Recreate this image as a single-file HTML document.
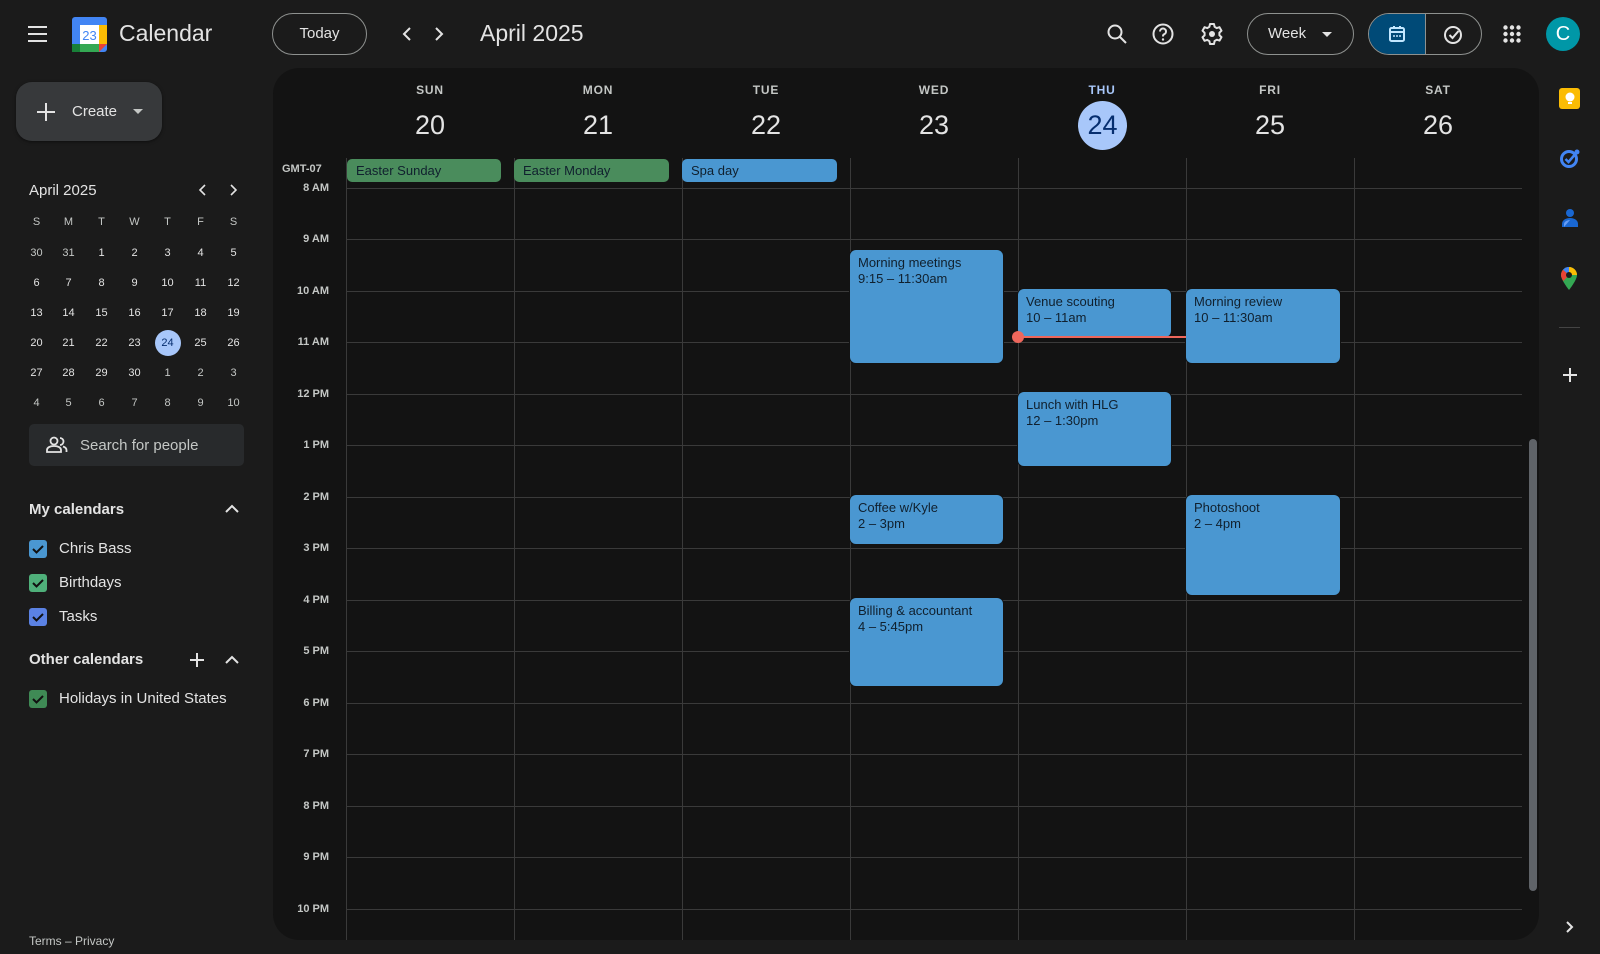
<!DOCTYPE html>
<html><head><meta charset="utf-8"><style>
*{box-sizing:border-box;margin:0;padding:0}
body{width:1600px;height:954px;background:#1b1b1b;font-family:"Liberation Sans",sans-serif;color:#e3e3e3;position:relative;overflow:hidden}
.a{position:absolute}
.main{left:273px;top:68px;width:1266px;height:872px;background:#131313;border-radius:26px;overflow:hidden}
.vl{position:absolute;width:1px;background:#3a3a3a}
.hl{position:absolute;height:1px;background:#3a3a3a;left:73px;width:1176px}
.dn{position:absolute;top:15px;width:168px;text-align:center;font-size:12px;letter-spacing:.8px;color:#c4c7c5;font-weight:bold}
.dd{position:absolute;top:42px;width:168px;text-align:center;font-size:27px;color:#e3e3e3}
.tl{position:absolute;left:0;width:56px;text-align:right;font-size:11px;color:#c4c7c5;font-weight:bold}
.ev{position:absolute;background:#4a97d1;border-radius:6px;color:#10202e;font-size:13px;line-height:16px;padding:5px 8px;box-shadow:0 0 0 1px #131313}
.chip{position:absolute;top:91px;height:23px;border-radius:5px;color:#10202e;font-size:13px;line-height:23px;padding-left:9px}
.mc{position:absolute;width:33px;text-align:center;font-size:11px;color:#e3e3e3}
.cb{position:absolute;left:29px;width:18px;height:18px;border-radius:3px}
.cbl{position:absolute;left:59px;font-size:15px;color:#e3e3e3}
</style></head><body>
<svg class="a" style="left:27px;top:24px" width="22" height="20"><path d="M1 3h19M1 10h19M1 17h19" stroke="#e3e3e3" stroke-width="2"/></svg>
<svg class="a" style="left:72px;top:17px" width="35" height="35" viewBox="0 0 35 35">
<rect x="0" y="0" width="35" height="35" rx="3" fill="#4285f4"/>
<rect x="27" y="8" width="8" height="19" fill="#fbbc04"/>
<rect x="0" y="27" width="27" height="8" fill="#34a853"/>
<rect x="0" y="27" width="8" height="8" fill="#188038"/>
<path d="M27 27h8l-8 8z" fill="#ea4335"/>
<rect x="8" y="8" width="19" height="19" fill="#fff"/>
<text x="17.5" y="23" text-anchor="middle" font-size="13" fill="#4285f4" font-family="Liberation Sans">23</text></svg>
<div class="a" style="left:119px;top:20px;font-size:23px;color:#e3e3e3">Calendar</div>
<div class="a" style="left:272px;top:13px;width:95px;height:42px;border:1px solid #8e918f;border-radius:21px;text-align:center;line-height:40px;font-size:15px">Today</div>
<svg class="a" style="left:400px;top:26px" width="50" height="16"><path d="M10 2L4 8l6 6M36 2l6 6-6 6" stroke="#e3e3e3" stroke-width="2" fill="none"/></svg>
<div class="a" style="left:480px;top:20px;font-size:23px;color:#e3e3e3">April 2025</div>
<svg class="a" style="left:1106px;top:23px" width="22" height="22"><circle cx="9" cy="9" r="6.5" stroke="#e3e3e3" stroke-width="2" fill="none"/><path d="M14 14l6 6" stroke="#e3e3e3" stroke-width="2"/></svg>
<svg class="a" style="left:1152px;top:23px" width="22" height="22"><circle cx="11" cy="11" r="9.5" stroke="#e3e3e3" stroke-width="2" fill="none"/><path d="M8 8.5a3 3 0 1 1 4 2.8c-1 .5-1 1-1 2.2" stroke="#e3e3e3" stroke-width="2" fill="none"/><circle cx="11" cy="16.5" r="1.2" fill="#e3e3e3"/></svg>
<svg class="a" style="left:1200px;top:22px" width="24" height="24" viewBox="0 0 24 24"><path d="M10 2h4l.6 2.8 2.2 1.3 2.7-.9 2 3.5-2.1 1.9v2.6l2.1 1.9-2 3.5-2.7-.9-2.2 1.3L14 22h-4l-.6-2.8-2.2-1.3-2.7.9-2-3.5 2.1-1.9v-2.6L2.5 8.7l2-3.5 2.7.9 2.2-1.3z" stroke="#e3e3e3" stroke-width="2" fill="none" stroke-linejoin="round"/><circle cx="12" cy="12" r="3" fill="#e3e3e3"/></svg>
<div class="a" style="left:1247px;top:13px;width:107px;height:42px;border:1px solid #8e918f;border-radius:21px;line-height:40px;font-size:15px;padding-left:20px">Week<span style="position:absolute;left:74px;top:18px;border:5px solid transparent;border-top-color:#e3e3e3;border-bottom:0"></span></div>
<div class="a" style="left:1368px;top:13px;width:114px;height:42px;border:1px solid #8e918f;border-radius:21px;overflow:hidden">
<div style="position:absolute;left:0;top:0;width:56px;height:42px;background:#004a77"></div>
<div style="position:absolute;left:56px;top:0;width:1px;height:42px;background:#8e918f"></div>
<svg style="position:absolute;left:19px;top:11px" width="18" height="18"><rect x="2" y="3" width="14" height="13" rx="1.5" stroke="#c2e7ff" stroke-width="2" fill="none"/><path d="M2 7h14M6 1v3M12 1v3" stroke="#c2e7ff" stroke-width="2"/><circle cx="6" cy="11" r="1" fill="#c2e7ff"/><circle cx="9" cy="11" r="1" fill="#c2e7ff"/><circle cx="12" cy="11" r="1" fill="#c2e7ff"/></svg>
<svg style="position:absolute;left:74px;top:11px" width="20" height="20"><circle cx="10" cy="10" r="8" stroke="#e3e3e3" stroke-width="2" fill="none"/><path d="M6.5 10l3 3 6-7" stroke="#e3e3e3" stroke-width="2" fill="none"/></svg>
</div>
<svg class="a" style="left:1503px;top:25px" width="18" height="18"><g fill="#e3e3e3"><circle cx="2.5" cy="2.5" r="2.2"/><circle cx="9" cy="2.5" r="2.2"/><circle cx="15.5" cy="2.5" r="2.2"/><circle cx="2.5" cy="9" r="2.2"/><circle cx="9" cy="9" r="2.2"/><circle cx="15.5" cy="9" r="2.2"/><circle cx="2.5" cy="15.5" r="2.2"/><circle cx="9" cy="15.5" r="2.2"/><circle cx="15.5" cy="15.5" r="2.2"/></g></svg>
<div class="a" style="left:1546px;top:17px;width:34px;height:34px;border-radius:50%;background:#0097a7;color:#fff;text-align:center;line-height:34px;font-size:20px">C</div>

<div class="a" style="left:16px;top:82px;width:146px;height:59px;background:#37393b;border-radius:16px;box-shadow:0 1px 3px rgba(0,0,0,.5)"></div>
<svg class="a" style="left:36px;top:102px" width="20" height="20"><path d="M10 1v18M1 10h18" stroke="#e3e3e3" stroke-width="2"/></svg>
<div class="a" style="left:72px;top:103px;font-size:15px;color:#e3e3e3">Create</div>
<div class="a" style="left:133px;top:109px;border:5px solid transparent;border-top-color:#c4c7c5;border-bottom:0"></div>
<div class="a" style="left:29px;top:182px;font-size:15px">April 2025</div>
<svg class="a" style="left:196px;top:183px" width="48" height="14"><path d="M9 2L4 7l5 5M35 2l5 5-5 5" stroke="#e3e3e3" stroke-width="1.6" fill="none"/></svg>
<div id="mini"></div>
<div class="a" style="left:29px;top:424px;width:215px;height:42px;background:#282a2c;border-radius:5px"></div>
<svg class="a" style="left:46px;top:436px" width="22" height="18"><circle cx="8" cy="5" r="3.5" stroke="#e3e3e3" stroke-width="1.8" fill="none"/><path d="M1 16v-2c0-2.5 3-4 7-4s7 1.5 7 4v2z" stroke="#e3e3e3" stroke-width="1.8" fill="none"/><path d="M14 2a3.5 3.5 0 0 1 0 7M17 10.5c2 .7 3.5 1.8 3.5 3.5v2" stroke="#e3e3e3" stroke-width="1.8" fill="none"/></svg>
<div class="a" style="left:80px;top:437px;font-size:15px;color:#c4c7c5">Search for people</div>
<div class="a" style="left:29px;top:501px;font-size:15px;font-weight:bold;color:#e3e3e3">My calendars</div>
<svg class="a" style="left:224px;top:504px" width="16" height="10"><path d="M2 8l6-6 6 6" stroke="#e3e3e3" stroke-width="2" fill="none"/></svg>
<div class="cb" style="top:540px;background:#4a97d1"></div><div class="cbl" style="top:540px">Chris Bass</div>
<div class="cb" style="top:574px;background:#4fb07a"></div><div class="cbl" style="top:574px">Birthdays</div>
<div class="cb" style="top:608px;background:#5b82e4"></div><div class="cbl" style="top:608px">Tasks</div>
<div class="a" style="left:29px;top:651px;font-size:15px;font-weight:bold;color:#e3e3e3">Other calendars</div>
<svg class="a" style="left:189px;top:652px" width="16" height="16"><path d="M8 1v14M1 8h14" stroke="#e3e3e3" stroke-width="2"/></svg>
<svg class="a" style="left:224px;top:655px" width="16" height="10"><path d="M2 8l6-6 6 6" stroke="#e3e3e3" stroke-width="2" fill="none"/></svg>
<div class="cb" style="top:690px;background:#3f8a55"></div><div class="cbl" style="top:690px">Holidays in United States</div>
<svg class="a" style="left:29px;top:540px" width="18" height="170"><g stroke="#111" stroke-width="2" fill="none"><path d="M4 9l3.5 3.5L14 6"/><path d="M4 43l3.5 3.5L14 40"/><path d="M4 77l3.5 3.5L14 74"/><path d="M4 159l3.5 3.5L14 156"/></g></svg>
<div class="a" style="left:29px;top:934px;font-size:12px;color:#c4c7c5">Terms – Privacy</div>

<div class="a main">
  <div class="dn" style="left:73px">SUN</div><div class="dd" style="left:73px">20</div>
  <div class="dn" style="left:241px">MON</div><div class="dd" style="left:241px">21</div>
  <div class="dn" style="left:409px">TUE</div><div class="dd" style="left:409px">22</div>
  <div class="dn" style="left:577px">WED</div><div class="dd" style="left:577px">23</div>
  <div class="dn" style="left:745px;color:#a8c7fa">THU</div>
  <div class="a" style="left:805px;top:33px;width:49px;height:49px;border-radius:50%;background:#a8c7fa;color:#062e6f;font-size:27px;text-align:center;line-height:49px">24</div>
  <div class="dn" style="left:913px">FRI</div><div class="dd" style="left:913px">25</div>
  <div class="dn" style="left:1081px">SAT</div><div class="dd" style="left:1081px">26</div>
  <div class="a" style="left:9px;top:95px;font-size:11px;font-weight:bold;color:#c4c7c5">GMT-07</div>
  <div class="vl" style="left:73px;top:90px;height:800px"></div>
  <div class="vl" style="left:241px;top:90px;height:800px"></div>
  <div class="vl" style="left:409px;top:90px;height:800px"></div>
  <div class="vl" style="left:577px;top:90px;height:800px"></div>
  <div class="vl" style="left:745px;top:90px;height:800px"></div>
  <div class="vl" style="left:913px;top:90px;height:800px"></div>
  <div class="vl" style="left:1081px;top:90px;height:800px"></div>
  <div class="chip" style="left:74px;width:154px;background:#4a8c5c">Easter Sunday</div>
  <div class="chip" style="left:241px;width:155px;background:#4a8c5c">Easter Monday</div>
  <div class="chip" style="left:409px;width:155px;background:#4a97d1">Spa day</div>
  <div id="hours"></div>
  <div class="ev" style="left:577px;top:182px;width:153px;height:113px">Morning meetings<br>9:15 – 11:30am</div>
  <div class="ev" style="left:745px;top:221px;width:153px;height:48px">Venue scouting<br>10 – 11am</div>
  <div class="ev" style="left:913px;top:221px;width:154px;height:74px">Morning review<br>10 – 11:30am</div>
  <div class="ev" style="left:745px;top:324px;width:153px;height:74px">Lunch with HLG<br>12 – 1:30pm</div>
  <div class="ev" style="left:577px;top:427px;width:153px;height:49px">Coffee w/Kyle<br>2 – 3pm</div>
  <div class="ev" style="left:913px;top:427px;width:154px;height:100px">Photoshoot<br>2 – 4pm</div>
  <div class="ev" style="left:577px;top:530px;width:153px;height:88px">Billing &amp; accountant<br>4 – 5:45pm</div>
  <div class="a" style="left:745px;top:268px;width:168px;height:2px;background:#ee675c"></div>
  <div class="a" style="left:739px;top:263px;width:12px;height:12px;border-radius:50%;background:#ee675c"></div>
  <div class="a" style="left:1256px;top:371px;width:8px;height:452px;border-radius:4px;background:#5f6368"></div>
</div>

<div class="a" style="left:1559px;top:88px;width:21px;height:21px;border-radius:3px;background:#fbbc04"></div>
<svg class="a" style="left:1563px;top:91px" width="14" height="15"><circle cx="7" cy="6" r="4.5" fill="#fff"/><rect x="5" y="11" width="4" height="2" fill="#fff"/></svg>
<svg class="a" style="left:1559px;top:148px" width="22" height="22"><circle cx="10" cy="11" r="7.5" stroke="#4285f4" stroke-width="3" fill="none"/><path d="M6.5 11l3 3 6-7" stroke="#4285f4" stroke-width="2.5" fill="none"/><circle cx="18" cy="4" r="2.5" fill="#4285f4"/></svg>
<svg class="a" style="left:1560px;top:208px" width="20" height="20"><circle cx="10" cy="5" r="4" fill="#1967d2"/><path d="M2 19v-3c0-4 4-6 8-6s8 2 8 6v3z" fill="#1967d2"/><path d="M4 19v-3c0-2 3-4 6-4" fill="#669df6"/></svg>
<svg class="a" style="left:1561px;top:267px" width="16" height="23" viewBox="0 0 16 23"><path d="M8 0a8 8 0 0 0-8 8c0 5 8 15 8 15s8-10 8-15a8 8 0 0 0-8-8z" fill="#34a853"/><path d="M8 0a8 8 0 0 0-6 2.7L8 8z" fill="#4285f4"/><path d="M2 2.7A8 8 0 0 0 0 8c0 2 1 4 2.4 6L8 8z" fill="#ea4335"/><path d="M8 0a8 8 0 0 1 8 8L8 8z" fill="#fbbc04"/><circle cx="8" cy="8" r="3" fill="#1b1b1b"/></svg>
<div class="a" style="left:1559px;top:327px;width:21px;height:1px;background:#444"></div>
<svg class="a" style="left:1562px;top:367px" width="16" height="16"><path d="M8 1v14M1 8h14" stroke="#e3e3e3" stroke-width="2"/></svg>
<svg class="a" style="left:1565px;top:920px" width="10" height="14"><path d="M2 2l5 5-5 5" stroke="#e3e3e3" stroke-width="2" fill="none"/></svg>

<script>
var h='';var labels=['8 AM','9 AM','10 AM','11 AM','12 PM','1 PM','2 PM','3 PM','4 PM','5 PM','6 PM','7 PM','8 PM','9 PM','10 PM'];
for(var i=0;i<labels.length;i++){var y=119.5+i*51.5;h+='<div class="hl" style="top:'+Math.round(y)+'px"></div><div class="tl" style="top:'+Math.round(y-6)+'px">'+labels[i]+'</div>';}
document.getElementById('hours').outerHTML=h;
var m='';var heads=['S','M','T','W','T','F','S'];var xs=[20,52,85,118,151,184,217];
for(var c=0;c<7;c++)m+='<div class="mc" style="left:'+xs[c]+'px;top:216px;color:#c4c7c5">'+heads[c]+'</div>';
var days=[30,31,1,2,3,4,5,6,7,8,9,10,11,12,13,14,15,16,17,18,19,20,21,22,23,24,25,26,27,28,29,30,1,2,3,4,5,6,7,8,9,10];
for(var k=0;k<42;k++){var r=Math.floor(k/7),c=k%7;var y=247+r*30;var st='';
if(k==25){m+='<div class="a" style="left:'+(xs[c]+4)+'px;top:'+(y-7)+'px;width:26px;height:26px;border-radius:50%;background:#a8c7fa"></div>';st='color:#062e6f;';}
if(k<2||k>31)st+='color:#c4c7c5;';
m+='<div class="mc" style="left:'+xs[c]+'px;top:'+y+'px;'+st+'">'+days[k]+'</div>';}
document.getElementById('mini').outerHTML=m;
</script>
</body></html>
